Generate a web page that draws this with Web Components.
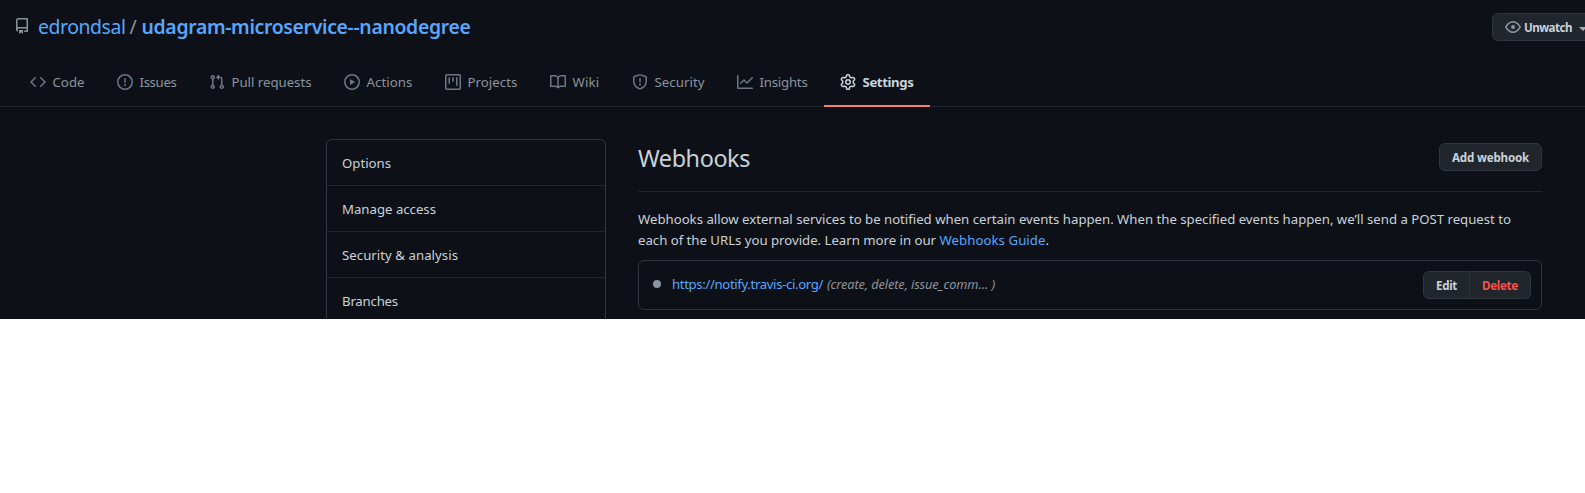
<!DOCTYPE html>
<html lang="en">
<head>
<meta charset="utf-8">
<title>Webhooks</title>
<style>
html,body{margin:0;background:#fff}
body{font:13.2px/21px "Noto Sans","Open Sans",sans-serif;color:#c9d1d9;overflow:hidden}
</style>
</head>
<body>
<repo-page></repo-page>
<script>
const define = (name, html, init) => customElements.define(name, class extends HTMLElement {
  connectedCallback() {
    if (this.shadowRoot) return;
    const t = document.createElement('template');
    t.innerHTML = html;
    this.attachShadow({ mode: 'open' }).append(t.content.cloneNode(true));
    if (init) init(this, this.shadowRoot);
  }
});

const ICONS = {
  repo: 'M2 2.5A2.5 2.5 0 014.5 0h8.75a.75.75 0 01.75.75v12.5a.75.75 0 01-.75.75h-2.5a.75.75 0 110-1.5h1.75v-2h-8a1 1 0 00-.714 1.7.75.75 0 01-1.072 1.05A2.495 2.495 0 012 11.5v-9zm10.5-1V9h-8c-.356 0-.694.074-1 .208V2.5a1 1 0 011-1h8zM5 12.25v3.25a.25.25 0 00.4.2l1.45-1.087a.25.25 0 01.3 0L8.6 15.7a.25.25 0 00.4-.2v-3.25a.25.25 0 00-.25-.25h-3.5a.25.25 0 00-.25.25z',
  code: 'M4.72 3.22a.75.75 0 011.06 1.06L2.06 8l3.72 3.72a.75.75 0 11-1.06 1.06L.47 8.53a.75.75 0 010-1.06l4.25-4.25zm6.56 0a.75.75 0 10-1.06 1.06L13.94 8l-3.72 3.72a.75.75 0 101.06 1.06l4.25-4.25a.75.75 0 000-1.06l-4.25-4.25z',
  issue: 'M8 1.5a6.5 6.5 0 100 13 6.5 6.5 0 000-13zM0 8a8 8 0 1116 0A8 8 0 010 8zm9 3a1 1 0 11-2 0 1 1 0 012 0zm-.25-6.25a.75.75 0 00-1.5 0v3.5a.75.75 0 001.5 0v-3.5z',
  pull: 'M7.177 3.073L9.573.677A.25.25 0 0110 .854v4.792a.25.25 0 01-.427.177L7.177 3.427a.25.25 0 010-.354zM3.75 2.5a.75.75 0 100 1.5.75.75 0 000-1.5zm-2.25.75a2.25 2.25 0 113 2.122v5.256a2.251 2.251 0 11-1.5 0V5.372A2.25 2.25 0 011.5 3.25zM11 2.5h-1V4h1a1 1 0 011 1v5.628a2.251 2.251 0 101.5 0V5A2.5 2.5 0 0011 2.5zm1 10.25a.75.75 0 111.5 0 .75.75 0 01-1.5 0zM3.75 12a.75.75 0 100 1.5.75.75 0 000-1.5z',
  play: 'M1.5 8a6.5 6.5 0 1113 0 6.5 6.5 0 01-13 0zM8 0a8 8 0 100 16A8 8 0 008 0zM6.379 5.227A.25.25 0 006 5.442v5.117a.25.25 0 00.379.214l4.264-2.559a.25.25 0 000-.428L6.379 5.227z',
  project: 'M1.75 0A1.75 1.75 0 000 1.75v12.5C0 15.216.784 16 1.75 16h12.5A1.75 1.75 0 0016 14.25V1.75A1.75 1.75 0 0014.25 0H1.75zM1.5 1.75a.25.25 0 01.25-.25h12.5a.25.25 0 01.25.25v12.5a.25.25 0 01-.25.25H1.75a.25.25 0 01-.25-.25V1.75zM11.75 3a.75.75 0 00-.75.75v7.5a.75.75 0 001.5 0v-7.5a.75.75 0 00-.75-.75zm-8.25.75a.75.75 0 011.5 0v5.5a.75.75 0 01-1.5 0v-5.5zM8 3a.75.75 0 00-.75.75v3.5a.75.75 0 001.5 0v-3.5A.75.75 0 008 3z',
  book: 'M0 1.75A.75.75 0 01.75 1h4.253c1.227 0 2.317.59 3 1.501A3.744 3.744 0 0111.006 1h4.245a.75.75 0 01.75.75v10.5a.75.75 0 01-.75.75h-4.507a2.25 2.25 0 00-1.591.659l-.622.621a.75.75 0 01-1.06 0l-.622-.621A2.25 2.25 0 005.258 13H.75a.75.75 0 01-.75-.75V1.75zm8.755 3a2.25 2.25 0 012.25-2.25H14.5v9h-3.757c-.71 0-1.4.201-1.992.572l.004-7.322zm-1.504 7.324l.004-5.073-.002-2.253A2.25 2.25 0 005.003 2.5H1.5v9h3.757a3.75 3.75 0 011.994.574z',
  shield: 'M7.467.133a1.75 1.75 0 011.066 0l5.25 1.68A1.75 1.75 0 0115 3.48V7c0 1.566-.32 3.182-1.303 4.682-.983 1.498-2.585 2.813-5.032 3.855a1.7 1.7 0 01-1.33 0c-2.447-1.042-4.049-2.357-5.032-3.855C1.32 10.182 1 8.566 1 7V3.48a1.75 1.75 0 011.217-1.667l5.25-1.68zm.61 1.429a.25.25 0 00-.153 0l-5.25 1.68a.25.25 0 00-.174.238V7c0 1.358.275 2.666 1.057 3.86.784 1.194 2.121 2.34 4.366 3.297a.2.2 0 00.154 0c2.245-.956 3.582-2.104 4.366-3.298C13.225 9.666 13.5 8.36 13.5 7V3.48a.25.25 0 00-.174-.237l-5.25-1.68zM9 10.5a1 1 0 11-2 0 1 1 0 012 0zm-.25-5.75a.75.75 0 10-1.5 0v3a.75.75 0 001.5 0v-3z',
  graph: 'M1.5 1.75a.75.75 0 00-1.5 0v12.5c0 .414.336.75.75.75h14.5a.75.75 0 000-1.5H1.5V1.75zm14.28 2.53a.75.75 0 00-1.06-1.06L10 7.94 7.53 5.47a.75.75 0 00-1.06 0L3.22 8.72a.75.75 0 001.06 1.06L7 7.06l2.47 2.47a.75.75 0 001.06 0l5.25-5.25z',
  gear: 'M7.429 1.525a6.593 6.593 0 011.142 0c.036.003.108.036.137.146l.289 1.105c.147.56.55.967.997 1.189.174.086.341.183.501.29.417.278.97.423 1.53.27l1.102-.303c.11-.03.175.016.195.046.219.31.41.641.573.989.014.031.022.11-.059.19l-.815.806c-.411.406-.562.957-.53 1.456a4.588 4.588 0 010 .582c-.032.499.119 1.05.53 1.456l.815.806c.08.08.073.159.059.19a6.494 6.494 0 01-.573.99c-.02.029-.086.074-.195.045l-1.103-.303c-.559-.153-1.112-.008-1.529.27-.16.107-.327.204-.5.29-.449.222-.851.628-.998 1.189l-.289 1.105c-.029.11-.101.143-.137.146a6.613 6.613 0 01-1.142 0c-.036-.003-.108-.037-.137-.146l-.289-1.105c-.147-.56-.55-.967-.997-1.189a4.502 4.502 0 01-.501-.29c-.417-.278-.97-.423-1.53-.27l-1.102.303c-.11.03-.175-.016-.195-.046a6.492 6.492 0 01-.573-.989c-.014-.031-.022-.11.059-.19l.815-.806c.411-.406.562-.957.53-1.456a4.587 4.587 0 010-.582c.032-.499-.119-1.05-.53-1.456l-.815-.806c-.08-.08-.073-.159-.059-.19a6.44 6.44 0 01.573-.99c.02-.029.086-.075.195-.045l1.103.303c.559.153 1.112.008 1.529-.27.16-.107.327-.204.5-.29.449-.222.851-.628.998-1.189l.289-1.105c.029-.11.101-.143.137-.146zM8 0c-.236 0-.47.01-.701.03-.743.065-1.29.615-1.458 1.261l-.29 1.106c-.017.066-.078.158-.211.224a5.994 5.994 0 00-.668.386c-.123.082-.233.09-.3.071L3.27 2.776c-.644-.177-1.392.02-1.82.63a7.977 7.977 0 00-.704 1.217c-.315.675-.111 1.422.363 1.891l.815.806c.05.048.098.147.088.294a6.084 6.084 0 000 .772c.01.147-.038.246-.088.294l-.815.806c-.474.469-.678 1.216-.363 1.891.2.428.436.835.704 1.218.428.609 1.176.806 1.82.63l1.103-.303c.066-.019.176-.011.299.071.213.143.436.272.668.386.133.066.194.158.212.224l.289 1.106c.169.646.715 1.196 1.458 1.26a8.094 8.094 0 001.402 0c.743-.064 1.29-.614 1.458-1.26l.29-1.106c.017-.066.078-.158.211-.224a5.98 5.98 0 00.668-.386c.123-.082.233-.09.3-.071l1.102.302c.644.177 1.392-.02 1.82-.63.268-.382.505-.789.704-1.217.315-.675.111-1.422-.364-1.891l-.814-.806c-.05-.048-.098-.147-.088-.294a6.1 6.1 0 000-.772c-.01-.147.039-.246.088-.294l.814-.806c.475-.469.679-1.216.364-1.891a7.992 7.992 0 00-.704-1.218c-.428-.609-1.176-.806-1.82-.63l-1.103.303c-.066.019-.176.011-.299-.071a5.991 5.991 0 00-.668-.386c-.133-.066-.194-.158-.212-.224L10.16 1.29C9.99.645 9.444.095 8.701.031A8.094 8.094 0 008 0zm1.5 8a1.5 1.5 0 11-3 0 1.5 1.5 0 013 0zM11 8a3 3 0 11-6 0 3 3 0 016 0z',
  eye: 'M1.679 7.932c.412-.621 1.242-1.75 2.366-2.717C5.175 4.242 6.527 3.5 8 3.5c1.473 0 2.824.742 3.955 1.715 1.124.967 1.954 2.096 2.366 2.717a.119.119 0 010 .136c-.412.621-1.242 1.75-2.366 2.717C10.825 11.758 9.473 12.5 8 12.5c-1.473 0-2.824-.742-3.955-1.715C2.92 9.818 2.09 8.69 1.679 8.068a.119.119 0 010-.136zM8 2c-1.981 0-3.67.992-4.933 2.078C1.797 5.169.88 6.423.43 7.1a1.619 1.619 0 000 1.798c.45.678 1.367 1.932 2.637 3.024C4.329 13.008 6.019 14 8 14c1.981 0 3.67-.992 4.933-2.078 1.27-1.091 2.187-2.345 2.637-3.023a1.619 1.619 0 000-1.798c-.45-.678-1.367-1.932-2.637-3.023C11.671 2.992 9.981 2 8 2zm0 8a2 2 0 100-4 2 2 0 000 4z'
};

define('octo-icon', `<style>:host{display:block;flex:none;width:16px;height:16px}svg{display:block}</style>
<svg width="16" height="16" viewBox="0 0 16 16" fill="currentColor" fill-rule="evenodd"><path/></svg>`,
  (el, root) => root.querySelector('path').setAttribute('d', ICONS[el.getAttribute('name')]));

// Text run whose tracking is adjusted so that it fills the width given in "w".
define('fit-text', `<style>:host{display:inline-block;white-space:nowrap;flex:none}span{display:inline-block}</style><span><slot></slot></span>`,
  (el, root) => {
    const span = root.querySelector('span'), w = +el.getAttribute('w');
    const natural = span.getBoundingClientRect().width;
    span.style.letterSpacing = (w - natural) / el.textContent.length + 'px';
    el.style.width = w + 'px';
  });

define('nav-tab', `<style>
:host{box-sizing:border-box;display:flex;align-items:center;gap:6.5px;padding:2px 16.5px 0 16px;height:50px;border-bottom:2px solid transparent;color:#8b949e}
octo-icon{color:#6e7681}
:host([selected]){color:#c9d1d9;font-weight:700;border-color:#f78166}
:host([selected]) octo-icon{color:#c9d1d9}
</style><octo-icon></octo-icon><slot></slot>`,
  (el, root) => {
    const i = document.createElement('octo-icon');
    i.setAttribute('name', el.getAttribute('icon'));
    root.querySelector('octo-icon').replaceWith(i);
  });

define('ui-button', `<style>
:host{box-sizing:border-box;display:flex;align-items:center;height:28px;padding:0 12px;flex:none;border:1px solid #30363d;border-radius:6px;background:#21262d;color:#c9d1d9;font-size:11.6px;font-weight:700;line-height:20px}
::slotted(fit-text){padding-top:2px}
:host([part-of=start]){border-radius:6px 0 0 6px}
:host([part-of=end]){border-radius:0 6px 6px 0;border-left:0}
:host([danger]){color:#f85149}
</style><slot></slot>`);

define('side-item', `<style>:host{box-sizing:border-box;display:flex;align-items:center;height:46px;padding:2px 0 0 15px;border-bottom:1px solid #21262d}</style><slot></slot>`);

define('repo-header', `<style>
:host{display:block;height:106px;border-bottom:1px solid #21262d}
.top{display:flex;padding:13px 0 0 14px;height:44px;box-sizing:content-box;justify-content:space-between;overflow:hidden}
.title{display:flex;align-items:flex-start;font-size:19.4px;line-height:28px;color:#58a6ff}
.title octo-icon{color:#8b949e;margin:5px 8px 0 0}
.sep{color:#8b949e;width:9px;margin:0 4px 0 3px;text-align:center}
b{font-weight:600}
ui-button{width:120px;margin-right:-27px}
ui-button octo-icon{color:#8b949e;margin-right:3px}
ui-button fit-text{padding-top:1px}
.caret{border:4px solid transparent;border-top-color:#a4abb3;border-bottom:0;margin:3px 0 0 7px}
nav{display:flex;padding-left:14px}
</style>
<div class="top">
 <div class="title"><octo-icon name="repo"></octo-icon><fit-text w="87.5">edrondsal</fit-text><span class="sep">/</span><b><fit-text w="329">udagram-microservice--nanodegree</fit-text></b></div>
 <ui-button><octo-icon name="eye"></octo-icon><fit-text w="48">Unwatch</fit-text><span class="caret"></span></ui-button>
</div>
<nav>
<nav-tab icon="code"><fit-text w="32">Code</fit-text></nav-tab>
<nav-tab icon="issue"><fit-text w="37">Issues</fit-text></nav-tab>
<nav-tab icon="pull"><fit-text w="80">Pull requests</fit-text></nav-tab>
<nav-tab icon="play"><fit-text w="46">Actions</fit-text></nav-tab>
<nav-tab icon="project"><fit-text w="50">Projects</fit-text></nav-tab>
<nav-tab icon="book"><fit-text w="27">Wiki</fit-text></nav-tab>
<nav-tab icon="shield"><fit-text w="50">Security</fit-text></nav-tab>
<nav-tab icon="graph"><fit-text w="48">Insights</fit-text></nav-tab>
<nav-tab icon="gear" selected><fit-text w="51">Settings</fit-text></nav-tab>
</nav>`);

define('side-menu', `<style>:host{box-sizing:border-box;display:block;width:280px;height:260px;border:1px solid #30363d;border-radius:6px;flex:none}</style>
<side-item><fit-text w="49">Options</fit-text></side-item>
<side-item><fit-text w="94">Manage access</fit-text></side-item>
<side-item><fit-text w="116">Security &amp; analysis</fit-text></side-item>
<side-item><fit-text w="56">Branches</fit-text></side-item>`);

define('webhook-panel', `<style>
:host{display:block;width:904px}
header{display:flex;justify-content:space-between;align-items:flex-start;height:52px;border-bottom:1px solid #21262d;margin-bottom:17px}
h2{margin:0;font-size:23.4px;font-weight:400;line-height:38px}
header ui-button{margin-top:4px}
p{margin:0}
p fit-text{display:block}
.row{display:flex}
a{color:#58a6ff}
.hook{box-sizing:border-box;display:flex;align-items:center;height:50px;margin-top:9px;padding:0 10px 0 14px;border:1px solid #30363d;border-radius:6px}
.hook > a, .hook > i{padding-bottom:2px}
.dot{width:8px;height:8px;border-radius:50%;background:#8b949e;margin:0 11px 2px 0}
i{color:#8b949e;font-size:12.8px;margin-left:4px}
.actions{display:flex;margin-left:auto}
</style>
<header><h2><fit-text w="112">Webhooks</fit-text></h2><ui-button><fit-text w="77">Add webhook</fit-text></ui-button></header>
<p><fit-text w="873">Webhooks allow external services to be notified when certain events happen. When the specified events happen, we’ll send a POST request to</fit-text></p>
<p class="row"><fit-text w="298">each of the URLs you provide. Learn more in our</fit-text><span style="width:3.5px"></span><a><fit-text w="106">Webhooks Guide</fit-text></a>.</p>
<div class="hook"><span class="dot"></span><a><fit-text w="151">https://notify.travis-ci.org/</fit-text></a><i><fit-text w="168">(create, delete, issue_comm… )</fit-text></i>
<div class="actions"><ui-button part-of="start"><fit-text w="21">Edit</fit-text></ui-button><ui-button part-of="end" danger><fit-text w="36">Delete</fit-text></ui-button></div></div>`);

define('repo-page', `<style>
:host{display:block;height:319px;overflow:hidden;background:#0d1117}
main{display:flex;gap:32px;padding:32px 0 0 326px}
</style><repo-header></repo-header><main><side-menu></side-menu><webhook-panel></webhook-panel></main>`);
</script>
</body>
</html>
